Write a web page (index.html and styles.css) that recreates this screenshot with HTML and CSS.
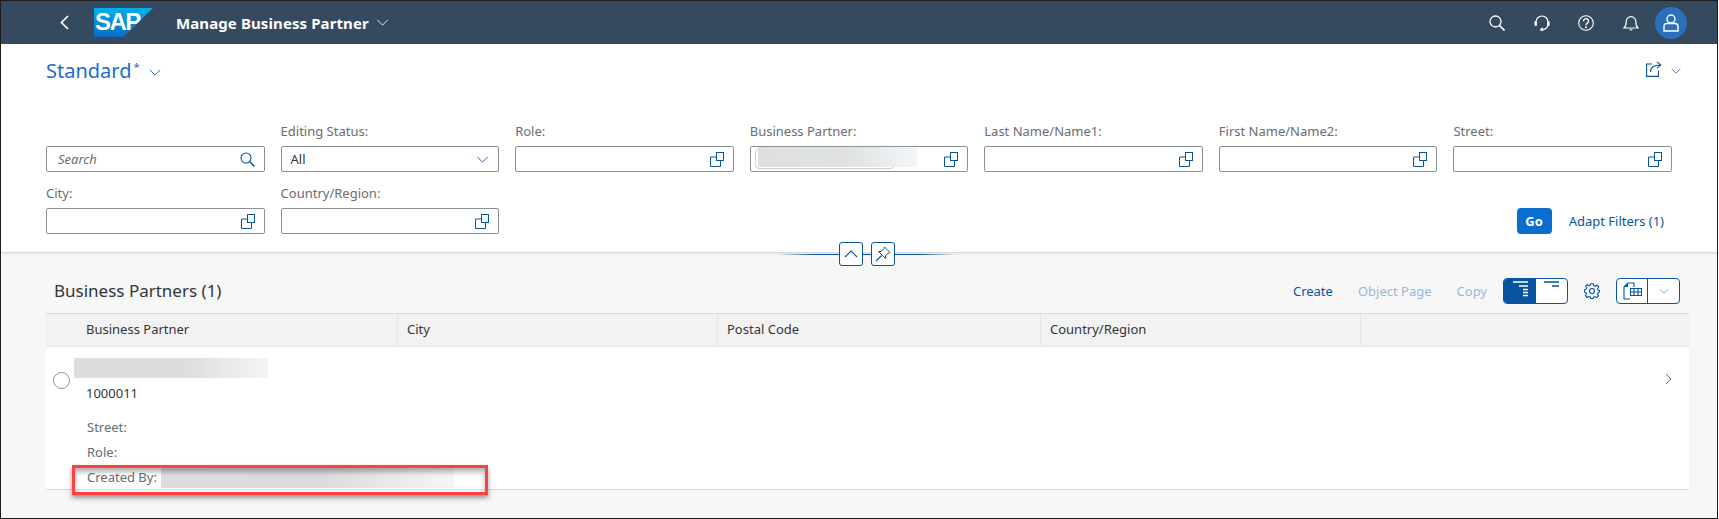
FILE: index.html
```html
<!DOCTYPE html>
<html lang="en">
<head>
  <meta charset="UTF-8">
  <title>Manage Business Partner</title>
  <link rel="stylesheet" href="styles.css">
</head>
<body>
  <svg class="defs" width="0" height="0">
    <symbol id="vh" viewBox="0 0 15 15">
      <path d="M7.5 5H1.5V14.5H11.5V8.5" fill="none" stroke="currentColor"/>
      <rect x="7.5" y="0.5" width="7" height="8" fill="none" stroke="currentColor"/>
    </symbol>
    <symbol id="down" viewBox="0 0 14 8">
      <path d="M1 1L7 7L13 1" fill="none" stroke="currentColor"/>
    </symbol>
  </svg>

  <div class="frame">
    <header class="shellbar">
      <svg class="back" width="9" height="15" viewBox="0 0 9 15"><path d="M8 1L1.5 7.5L8 14" fill="none" stroke="#fff" stroke-width="1.7"/></svg>
      <div class="logo"><span>SAP</span></div>
      <span class="app-title">Manage Business Partner</span>
      <svg class="app-down"><use href="#down"/></svg>
      <div class="shell-actions">
        <svg width="16" height="16" viewBox="0 0 16 16"><circle cx="6.5" cy="6.5" r="5.5" fill="none" stroke="#fff" stroke-width="1.3"/><path d="M10.5 10.5L15.5 15.5" stroke="#fff" stroke-width="1.6"/></svg>
        <svg width="16" height="16" viewBox="0 0 16 16"><path d="M2 9V7A6 6 0 0 1 14 7V9A5 5 0 0 1 9.5 14.5" fill="none" stroke="#fff" stroke-width="1.2"/><rect x="0.5" y="6" width="2.4" height="5" rx="1" fill="#fff"/><rect x="13.2" y="6" width="2.4" height="5" rx="1" fill="#fff"/><circle cx="8" cy="14.5" r="1.7" fill="#fff"/></svg>
        <svg width="16" height="16" viewBox="0 0 16 16"><circle cx="8" cy="8" r="7.3" fill="none" stroke="#fff" stroke-width="1.1"/><path d="M5.5 6.2A2.5 2.5 0 1 1 9.4 8.2C8.4 8.9 8 9.300 8 10.300" fill="none" stroke="#fff" stroke-width="1.4"/><circle cx="8" cy="12.300" r="1" fill="#fff"/></svg>
        <svg width="16" height="16" viewBox="0 0 16 16"><path d="M1 13C2.800 11.500 3.200 10 3.200 6.500A4.800 4.800 0 0 1 12.800 6.500C12.800 10 13.200 11.500 15 13Z" fill="none" stroke="#fff" stroke-width="1.200"/><path d="M6.300 14.300A1.800 1.800 0 0 0 9.700 14.300Z" fill="#fff"/></svg>
        <div class="avatar">
          <svg width="16" height="18" viewBox="0 0 16 18"><circle cx="8" cy="5" r="4" fill="none" stroke="#fff" stroke-width="1.400"/><path d="M1 17V12.500C1 10.500 2.500 9.500 4 9.500H12C13.500 9.500 15 10.500 15 12.500V17Z" fill="none" stroke="#fff" stroke-width="1.400"/></svg>
        </div>
      </div>
    </header>

    <section class="filterbar">
      <div class="variant-row">
        <span class="variant">Standard<sup>*</sup></span>
        <svg class="variant-down"><use href="#down"/></svg>
        <svg class="share" width="16" height="16" viewBox="0 0 16 16"><path d="M6 3H0.600V15.400H12.500V9.500" fill="none" stroke="#0854a0" stroke-width="1.100"/><path d="M4.500 11C4.500 6.500 7.500 4 14.500 4M11 0.800L14.800 4L11 7.200" fill="none" stroke="#0854a0" stroke-width="1.100"/></svg>
        <svg class="share-down"><use href="#down"/></svg>
      </div>

      <div class="filters">
        <div class="filter">
          <label class="blank">&nbsp;</label>
          <div class="field"><em>Search</em>
            <svg width="15" height="15" viewBox="0 0 15 15"><circle cx="6" cy="6" r="5" fill="none" stroke="#0854a0" stroke-width="1.100"/><path d="M9.500 9.500L14.500 14.500" stroke="#0854a0" stroke-width="1.400"/></svg>
          </div>
        </div>
        <div class="filter">
          <label>Editing Status:</label>
          <div class="field"><span>All</span><svg class="select-down"><use href="#down"/></svg></div>
        </div>
        <div class="filter">
          <label>Role:</label>
          <div class="field"><svg class="vh"><use href="#vh"/></svg></div>
        </div>
        <div class="filter">
          <label>Business Partner:</label>
          <div class="field"><div class="token"></div><svg class="vh"><use href="#vh"/></svg></div>
        </div>
        <div class="filter">
          <label>Last Name/Name1:</label>
          <div class="field"><svg class="vh"><use href="#vh"/></svg></div>
        </div>
        <div class="filter">
          <label>First Name/Name2:</label>
          <div class="field"><svg class="vh"><use href="#vh"/></svg></div>
        </div>
        <div class="filter">
          <label>Street:</label>
          <div class="field"><svg class="vh"><use href="#vh"/></svg></div>
        </div>
        <div class="filter">
          <label>City:</label>
          <div class="field"><svg class="vh"><use href="#vh"/></svg></div>
        </div>
        <div class="filter">
          <label>Country/Region:</label>
          <div class="field"><svg class="vh"><use href="#vh"/></svg></div>
        </div>
        <div class="filter-actions">
          <button class="go">Go</button>
          <span class="adapt">Adapt Filters (1)</span>
        </div>
      </div>

      <div class="collapse">
        <span class="collapse-line left"></span>
        <span class="collapse-btn"><svg width="14" height="8" viewBox="0 0 14 8"><path d="M1 7L7 1L13 7" fill="none" stroke="#0854a0" stroke-width="1.100"/></svg></span>
        <span class="collapse-gap"></span>
        <span class="collapse-btn"><svg width="16" height="16" viewBox="0 0 16 16"><path d="M9.500 1L15 6.500L13.500 7L10.500 10L10.500 12.500L3.500 5.500L6 5.500L9 2.500Z" fill="none" stroke="#0854a0"/><path d="M6.500 9.500L1 15" stroke="#0854a0" stroke-width="1.100"/></svg></span>
        <span class="collapse-line right"></span>
      </div>
    </section>

    <section class="content">
      <div class="toolbar">
        <h2>Business Partners (1)</h2>
        <span class="tool-link">Create</span>
        <span class="tool-link off">Object Page</span>
        <span class="tool-link off">Copy</span>
        <div class="segmented">
          <span class="seg on"><svg width="16" height="16" viewBox="0 0 16 16"><path d="M1 1H16M7 5H16M11 8.500H16M11 11.500H16M11 14.500H16" stroke="#fff" stroke-width="1.300"/></svg></span>
          <span class="seg"><svg width="16" height="16" viewBox="0 0 16 16"><path d="M1 1H16M9 5H16" stroke="#0854a0" stroke-width="1.500"/></svg></span>
        </div>
        <svg class="gear" width="16" height="16" viewBox="0 0 16 16"><circle cx="8" cy="8" r="2.500" fill="none" stroke="#0854a0" stroke-width="1.100"/><path d="M6.700 0.700H9.300L9.700 2.600L11.300 3.300L13 2.200L14.700 4.100L13.500 5.700L14.100 7.100L15.500 7.500V9L14 9.700L13.500 11.100L14.400 12.900L12.600 14.600L11 13.500L9.600 14.100L9.200 15.500H6.800L6.300 14L4.800 13.500L3.100 14.500L1.400 12.700L2.500 11L2 9.700L0.500 9.200V6.900L2 6.400L2.600 5L1.600 3.200L3.400 1.500L5 2.600L6.300 2.100Z" fill="none" stroke="#0854a0" stroke-width="1.100"/></svg>
        <div class="export">
          <span class="export-main"><svg width="19" height="18" viewBox="0 0 19 18"><path d="M5 1H11V5M5 1L1 5V17H7" fill="none" stroke="#0854a0" stroke-width="1.100"/><path d="M1 5H5V1Z" fill="#0854a0"/><path d="M7.500 6.500H18.500V13.500H7.500ZM7.500 10H18.500M11 6.500V13.500M15 6.500V13.500" fill="none" stroke="#0854a0" stroke-width="1.100"/></svg></span>
          <span class="export-more"><svg class="export-down"><use href="#down"/></svg></span>
        </div>
      </div>

      <div class="table">
        <div class="thead">
          <div class="th first">Business Partner</div>
          <div class="th">City</div>
          <div class="th">Postal Code</div>
          <div class="th">Country/Region</div>
          <div class="th last"></div>
        </div>
        <div class="row">
          <span class="radio"></span>
          <div class="cell">
            <div class="blur blur-name"></div>
            <div class="partner-id">1000011</div>
            <div class="attr first-attr">Street:</div>
            <div class="attr">Role:</div>
            <div class="attr created">Created By:<span class="blur blur-user"></span></div>
          </div>
          <svg class="row-nav" width="7" height="12" viewBox="0 0 7 12"><path d="M1 1L6 6L1 11" fill="none" stroke="#6a6d70"/></svg>
        </div>
      </div>
    </section>

    <div class="callout"></div>
  </div>
</body>
</html>
```

FILE: styles.css
```css
* {
  box-sizing: border-box;
}

body {
  margin: 0;
  background-color: #ffffff;
  font-family: "Noto Sans", "Liberation Sans", sans-serif;
  font-size: 13px;
  color: #32363a;
}

.defs {
  position: absolute;
}

svg {
  display: block;
}

.frame {
  position: relative;
  width: 1718px;
  height: 519px;
  border: 1px solid #1c1c1c;
  background-color: #f7f7f7;
  overflow: hidden;
}

/* shell bar */
.shellbar {
  display: flex;
  align-items: center;
  height: 43px;
  padding-left: 59px;
  padding-right: 29px;
  background-color: #354a5f;
}

.back {
  margin-right: 25px;
}

.logo {
  width: 59px;
  height: 29px;
  margin-right: 23px;
  padding-left: 1px;
  background: linear-gradient(#00b1eb, #0a6bc4);
  clip-path: polygon(0 0, 100% 0, 50% 100%, 0 100%);
  color: #ffffff;
  font-family: "Liberation Sans", sans-serif;
  font-size: 24px;
  font-weight: bold;
  line-height: 28px;
  letter-spacing: -1.5px;
}

.app-title {
  color: #ffffff;
  font-size: 15px;
  font-weight: 700;
  letter-spacing: 0.1px;
}

.app-down {
  width: 13px;
  height: 7px;
  margin-left: 7px;
  color: #ffffff;
}

.shell-actions {
  display: flex;
  align-items: center;
  gap: 28.5px;
  margin-left: auto;
  margin-right: 1px;
}

.avatar {
  display: flex;
  align-items: center;
  justify-content: center;
  width: 32px;
  height: 32px;
  margin-left: -12px;
  border-radius: 50%;
  background-color: #2b70b9;
}

/* filter bar */
.filterbar {
  position: relative;
  height: 209px;
  padding: 0 45px;
  background-color: #ffffff;
  border-bottom: 1px solid #d9d9d9;
  box-shadow: 0 1px 2px rgba(0, 0, 0, 0.08);
}

.variant-row {
  display: flex;
  align-items: center;
  height: 49px;
  margin-right: -9px;
  padding-top: 4px;
}

.variant {
  color: #1a6dd0;
  font-size: 20px;
}

.variant sup {
  font-size: 11px;
  line-height: 0;
  margin-left: 2px;
  vertical-align: 7px;
}

.variant-down {
  width: 12px;
  height: 7px;
  margin-left: 9px;
  margin-top: 4px;
  color: #0854a0;
}

.share {
  margin-left: auto;
  margin-right: 9px;
  margin-top: -3px;
}

.share-down {
  width: 10px;
  height: 6px;
  color: #0854a0;
}

.filters {
  display: grid;
  grid-template-columns: repeat(7, 1fr);
  column-gap: 16px;
  row-gap: 12px;
  margin-top: 29px;
}

.filter label {
  display: block;
  height: 18px;
  margin-bottom: 6px;
  color: #6a6d70;
  line-height: 18px;
}

.field {
  position: relative;
  display: flex;
  align-items: center;
  height: 26px;
  padding: 0 9px 0 11px;
  border: 1px solid #89919a;
  border-radius: 2px;
  background-color: #ffffff;
}

.field em {
  color: #6a6d70;
  font-style: italic;
}

.field span {
  margin-left: -2px;
}

.field svg {
  margin-left: auto;
  color: #0854a0;
}

.field .vh {
  width: 15px;
  height: 15px;
}

.select-down {
  width: 13px;
  height: 7px;
}

.token {
  position: absolute;
  left: 4px;
  top: 1px;
  width: 140px;
  height: 21px;
  border: 1px solid #d3d3d3;
  border-radius: 4px;
}

.token::after {
  content: "";
  position: absolute;
  left: 2px;
  top: -2px;
  width: 159px;
  height: 20px;
  background: linear-gradient(90deg, #dfdfdf 0, #e0e1e1 55%, #f4f5f6 100%);
}

.filter-actions {
  grid-column: 7;
  display: flex;
  align-items: flex-end;
  justify-content: flex-end;
  gap: 17px;
  padding-right: 8px;
}

.go {
  width: 35px;
  height: 26px;
  padding: 0;
  border: none;
  border-radius: 4px;
  background-color: #0a6ed1;
  color: #ffffff;
  font-family: inherit;
  font-size: 13px;
  font-weight: 700;
}

.adapt {
  height: 26px;
  color: #0854a0;
  line-height: 26px;
}

.collapse {
  position: absolute;
  left: 777px;
  bottom: -14px;
  display: flex;
  align-items: center;
  height: 24px;
  z-index: 2;
}

.collapse-btn {
  display: flex;
  align-items: center;
  justify-content: center;
  width: 24px;
  height: 24px;
  border: 1px solid #0854a0;
  border-radius: 3px;
  background-color: #ffffff;
}

.collapse-gap {
  width: 8px;
  height: 1px;
  background-color: #0854a0;
}

.collapse-line {
  width: 61px;
  height: 1px;
}

.collapse-line.left {
  background: linear-gradient(90deg, rgba(8, 84, 160, 0), #0854a0 60%);
}

.collapse-line.right {
  background: linear-gradient(90deg, #0854a0 40%, rgba(8, 84, 160, 0));
}

/* table section */
.content {
  padding: 0 28px 0 45px;
}

.toolbar {
  display: flex;
  align-items: center;
  height: 60px;
  padding-top: 15px;
  padding-left: 8px;
  padding-right: 9px;
}

.toolbar h2 {
  margin: 0 auto 0 0;
  font-size: 17px;
  font-weight: 400;
}

.tool-link {
  margin-right: 25px;
  color: #0854a0;
}

.tool-link.off {
  opacity: 0.4;
}

.segmented {
  display: flex;
  width: 65px;
  height: 26px;
  margin-left: -9px;
  border: 1px solid #0854a0;
  border-radius: 4px;
  background-color: #ffffff;
  overflow: hidden;
}

.seg {
  display: flex;
  justify-content: center;
  padding-top: 2px;
  width: 32px;
}

.seg.on {
  background-color: #0854a0;
}

.gear {
  margin: 0 16px;
}

.export {
  display: flex;
  width: 64px;
  height: 26px;
  border: 1px solid #0854a0;
  border-radius: 4px;
  background-color: #ffffff;
}

.export-main {
  display: flex;
  align-items: center;
  justify-content: center;
  width: 31px;
  border-right: 1px solid #0854a0;
}

.export-more {
  display: flex;
  flex: 1;
  align-items: center;
  justify-content: center;
}

.export-down {
  width: 10px;
  height: 6px;
  color: #6f8fb5;
}

.table {
  background-color: #ffffff;
  border-bottom: 1px solid #d9d9d9;
}

.thead {
  display: grid;
  grid-template-columns: 352px 320px 323px 320px 1fr;
  height: 34px;
  background-color: #f2f2f2;
  border-top: 1px solid #d9d9d9;
  border-bottom: 1px solid #e5e5e5;
}

.th {
  padding-left: 9px;
  border-right: 1px solid #e5e5e5;
  line-height: 31px;
}

.th.first {
  padding-left: 40px;
}

.th.last {
  border-right: none;
}

.row {
  position: relative;
  display: flex;
  height: 142px;
}

.radio {
  flex: none;
  width: 17px;
  height: 17px;
  margin: 25px 16px 0 7px;
  border: 1px solid #89919a;
  border-radius: 50%;
}

.cell {
  flex: 1;
  padding-top: 11px;
}

.blur {
  display: block;
  background: linear-gradient(90deg, #dcdddf 0, #dcdcde 55%, #f5f5f5 100%);
}

.blur-name {
  width: 194px;
  height: 20px;
  margin-left: -12px;
}

.partner-id {
  margin-top: 6px;
  line-height: 18px;
}

.attr {
  margin-top: 7px;
  margin-left: 1px;
  color: #6a6d70;
  line-height: 18px;
}

.first-attr {
  margin-top: 16px;
}

.created {
  display: flex;
  align-items: center;
  gap: 4px;
  height: 18px;
}

.blur-user {
  width: 293px;
  height: 21px;
}

.row-nav {
  position: absolute;
  right: 17px;
  top: 26px;
}

/* annotation drawn over the screenshot */
.callout {
  position: absolute;
  left: 71px;
  top: 464px;
  width: 416px;
  height: 30px;
  border: 3px solid #ff4040;
  box-shadow: 0 3px 5px rgba(0, 0, 0, 0.4), inset 0 4px 5px rgba(0, 0, 0, 0.3);
}
```
